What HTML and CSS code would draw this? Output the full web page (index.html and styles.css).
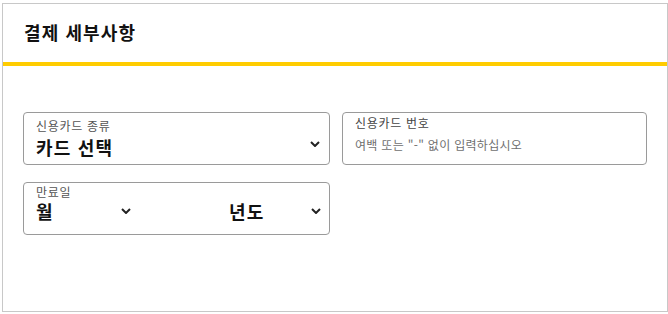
FILE: index.html
```html
<!DOCTYPE html>
<html lang="ko">
<head>
<meta charset="utf-8">
<link rel="stylesheet" href="styles.css">
</head>
<body>
<div class="panel">
  <div class="header"><h2 class="title">결제 세부사항</h2></div>
  <div class="content">
    <div class="grid">
      <div class="field field-select">
        <div class="label">신용카드 종류</div>
        <div class="value-row">
          <span class="value">카드 선택</span>
          <svg class="chev" width="10" height="6" viewBox="0 0 10 6"><polyline points="1,1 5,5 9,1" fill="none" stroke="#222" stroke-width="2"/></svg>
        </div>
      </div>
      <div class="field field-input">
        <div class="label">신용카드 번호</div>
        <div class="placeholder">여백 또는 "-" 없이 입력하십시오</div>
      </div>
      <div class="field field-date">
        <div class="label">만료일</div>
        <div class="date-row">
          <div class="part part-month">
            <span class="value">월</span>
            <svg class="chev" width="10" height="6" viewBox="0 0 10 6"><polyline points="1,1 5,5 9,1" fill="none" stroke="#222" stroke-width="2"/></svg>
          </div>
          <div class="part part-year">
            <span class="value">년도</span>
            <svg class="chev" width="10" height="6" viewBox="0 0 10 6"><polyline points="1,1 5,5 9,1" fill="none" stroke="#222" stroke-width="2"/></svg>
          </div>
        </div>
      </div>
    </div>
  </div>
</div>
</body>
</html>
```
FILE: styles.css
```css
* { box-sizing: border-box; }
body {
  margin: 3px 0 0 2px;
  font-family: "Noto Sans CJK KR", "Noto Sans", sans-serif;
  background: #fff;
  color: #111;
}
.panel {
  width: 666px;
  height: 309px;
  border: 1px solid #c8c8c8;
}
.header {
  height: 62px;
  border-bottom: 4px solid #ffcc00;
  padding: 0 0 0 21px;
  display: flex;
  align-items: center;
}
.title {
  margin: 0;
  font-size: 18px;
  font-weight: 700;
  line-height: 24px;
  letter-spacing: 1.1px;
  color: #111;
  position: relative;
  top: -1px;
}
.content {
  padding: 46px 20px 0 20px;
}
.grid {
  display: grid;
  grid-template-columns: 307px 305px;
  column-gap: 12px;
  row-gap: 17px;
}
.field {
  height: 53px;
  border: 1px solid #9a9a9a;
  border-radius: 4px;
  padding: 0 12px;
}
.label {
  font-size: 12px;
  line-height: 15px;
  letter-spacing: 0.7px;
  color: #555;
}
.value {
  font-size: 18px;
  font-weight: 700;
  line-height: 20px;
  letter-spacing: 1.2px;
  color: #111;
}
.chev { display: block; }
.field-select { padding-top: 5px; }
.value-row {
  display: flex;
  align-items: center;
  justify-content: space-between;
  margin-top: 4px;
}
.value-row .chev { margin-right: -3px; margin-top: -6px; }
.field-input { padding-top: 2px; }
.field-input .label { line-height: 16px; color: #444; }
.placeholder {
  margin-top: 6px;
  font-size: 12px;
  line-height: 16px;
  letter-spacing: 0.3px;
  color: #6f6f6f;
}
.field-date { padding-top: 1px; }
.date-row {
  display: flex;
  margin-top: 2px;
}
.part {
  display: flex;
  align-items: center;
}
.part-month { width: 95px; justify-content: space-between; }
.part-year { flex: 1; padding-left: 98px; justify-content: space-between; margin-right: -4px; }
```
